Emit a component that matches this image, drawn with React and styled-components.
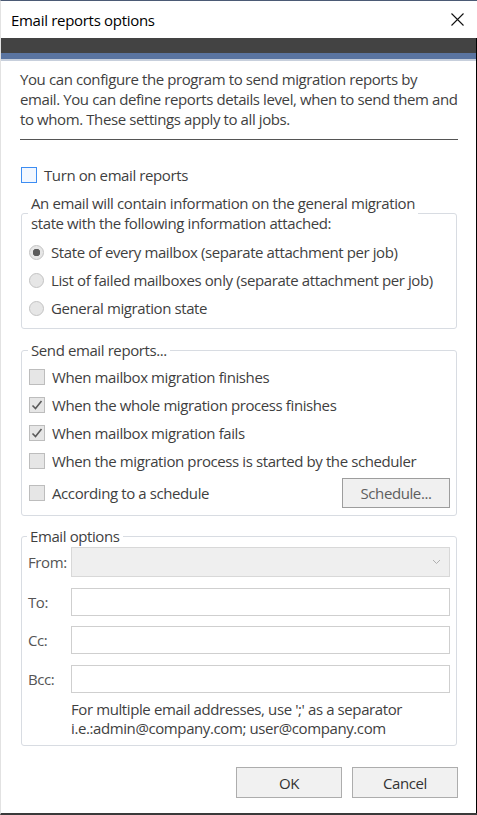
import React from "react"
import styled, { createGlobalStyle } from "styled-components"

const GlobalStyle = createGlobalStyle`
  html, body {
    margin: 0;
    padding: 0;
    background: #fff;
  }
  body {
    font-family: "Open Sans", "Noto Sans", sans-serif;
    color: #3f3f3f;
  }
  * {
    box-sizing: border-box;
  }
`

const App = () => (
  <>
    <GlobalStyle />
    <Window>
      <TitleBar>
        <Title>Email reports options</Title>
        <CloseIcon />
      </TitleBar>
      <Body>
        <DarkBand />
        <BlueBand />
        <Content>
          <Intro>
            You can configure the program to send migration reports by<br />
            email. You can define reports details level, when to send them and<br />
            to whom. These settings apply to all jobs.
          </Intro>
          <Rule />
          <TopOption>
            <CheckBox $focus />
            <span>Turn on email reports</span>
          </TopOption>

          <Group $kind="first">
            <Legend>
              An email will contain information on the general migration<br />
              state with the following information attached:
            </Legend>
            <Radio label="State of every mailbox (separate attachment per job)" checked />
            <Radio label="List of failed mailboxes only (separate attachment per job)" />
            <Radio label="General migration state" />
          </Group>

          <Group $kind="reports">
            <Legend>Send email reports...</Legend>
            <Check label="When mailbox migration finishes" />
            <Check label="When the whole migration process finishes" checked />
            <Check label="When mailbox migration fails" checked />
            <Check label="When the migration process is started by the scheduler" />
            <ScheduleRow>
              <Check label="According to a schedule" />
              <ScheduleButton>Schedule...</ScheduleButton>
            </ScheduleRow>
          </Group>

          <Group $kind="fields">
            <Legend>Email options</Legend>
            <FieldRow>
              <FieldLabel>From:</FieldLabel>
              <Select>
                <Chevron />
              </Select>
            </FieldRow>
            <FieldRow>
              <FieldLabel>To:</FieldLabel>
              <Input />
            </FieldRow>
            <FieldRow>
              <FieldLabel>Cc:</FieldLabel>
              <Input />
            </FieldRow>
            <FieldRow>
              <FieldLabel>Bcc:</FieldLabel>
              <Input />
            </FieldRow>
            <Hint>
              For multiple email addresses, use ';' as a separator<br />
              i.e.:admin@company.com; user@company.com
            </Hint>
          </Group>
        </Content>
        <Footer>
          <Button>OK</Button>
          <Button>Cancel</Button>
        </Footer>
      </Body>
    </Window>
  </>
)

export default App

const Radio = ({ label, checked }) => (
  <OptionRow>
    <RadioDot $checked={checked} />
    <span>{label}</span>
  </OptionRow>
)

const Check = ({ label, checked }) => (
  <OptionRow $gap={7}>
    <CheckBox>
      {checked && (
        <svg width="12" height="12" viewBox="0 0 12 12">
          <path d="M1.5 6.5 L4.5 9.5 L10.5 2" fill="none" stroke="#5a5a5a" strokeWidth="1.6" />
        </svg>
      )}
    </CheckBox>
    <span>{label}</span>
  </OptionRow>
)

const CloseIcon = () => (
  <svg width="13" height="13" viewBox="0 0 13 13">
    <path d="M0.5 0.5 L12.5 12.5 M12.5 0.5 L0.5 12.5" stroke="#111" strokeWidth="1.1" />
  </svg>
)

const Chevron = () => (
  <svg width="9" height="6" viewBox="0 0 9 6">
    <path d="M1 1 L4.5 4.5 L8 1" fill="none" stroke="#b0b0b0" strokeWidth="1" />
  </svg>
)

const groupSpacing = {
  first: { margin: "4px", padding: "5px 6px 6px 7px" },
  reports: { margin: "11px", padding: "3px 6px 4px 7px" },
  fields: { margin: "10px", padding: "1px 6px 7px 6px" },
}

const Window = styled.div`
  width: 477px;
  height: 815px;
  display: flex;
  flex-direction: column;
  border-top: 1px solid #4b5a75;
  border-left: 1px solid #e2e2e2;
  border-bottom: 2px solid #3a3a3a;
  background: #fff;
  font-size: 15px;
  letter-spacing: -0.4px;
`

const TitleBar = styled.div`
  height: 37px;
  flex: 0 0 37px;
  display: flex;
  align-items: center;
  justify-content: space-between;
  padding: 0 13px 0 10px;
`

const Title = styled.div`
  font-size: 15px;
  letter-spacing: -0.3px;
  color: #000;
`

const Body = styled.div`
  flex: 1;
  display: flex;
  flex-direction: column;
  border-right: 1px solid #000;
`

const DarkBand = styled.div`
  height: 15px;
  background: #434343;
`

const BlueBand = styled.div`
  height: 6px;
  background: #5a74a0;
  border-bottom: 2px solid #c7cfdc;
  box-sizing: content-box;
`

const Content = styled.div`
  padding: 8px 18px 0 19px;
`

const Intro = styled.p`
  margin: 0;
  line-height: 20px;
  white-space: nowrap;
`

const Rule = styled.div`
  height: 1px;
  margin-top: 10px;
  background: #555;
`

const OptionRow = styled.label`
  display: flex;
  align-items: center;
  gap: ${(p) => p.$gap || 7}px;
  height: 28px;
  white-space: nowrap;
`

const TopOption = styled(OptionRow)`
  margin-top: 21px;
  padding-left: 1px;
`

const CheckBox = styled.span`
  width: 16px;
  height: 16px;
  flex: 0 0 16px;
  display: flex;
  align-items: center;
  justify-content: center;
  border: 1px solid ${(p) => (p.$focus ? "#3d8df2" : "#bdbdbd")};
  background: ${(p) => (p.$focus ? "#f2f7ff" : "#e6e6e6")};
`

const RadioDot = styled.span`
  width: 15px;
  height: 15px;
  flex: 0 0 15px;
  border-radius: 50%;
  border: 1px solid #c3c3c3;
  background: ${(p) =>
    p.$checked
      ? "radial-gradient(circle, #5b5b5b 0 3.5px, #e6e6e6 4px)"
      : "#e6e6e6"};
`

const Group = styled.fieldset`
  margin: ${(p) => groupSpacing[p.$kind].margin} 1px 0 1px;
  padding: ${(p) => groupSpacing[p.$kind].padding};
  border: 1px solid #d8dce2;
  border-radius: 3px;
  min-width: 0;
`

const Legend = styled.legend`
  margin-left: -1px;
  padding: 0 3px;
  line-height: 20px;
  white-space: nowrap;
`

const ScheduleRow = styled.div`
  display: flex;
  align-items: center;
  justify-content: space-between;
  height: 36px;
`

const ScheduleButton = styled.button`
  width: 108px;
  height: 30px;
  border: 1px solid #9d9d9d;
  background: #f0f0f0;
  color: #5e5e5e;
  font: inherit;
  letter-spacing: inherit;
  padding: 0;
`

const FieldRow = styled.div`
  display: flex;
  align-items: center;
  height: 28px;
  margin-bottom: 10.5px;

  &:first-of-type {
    height: 30px;
  }
`

const FieldLabel = styled.span`
  width: 43px;
  color: #555;
`

const Input = styled.div`
  flex: 1;
  height: 100%;
  border: 1px solid #cfcfcf;
  background: #fff;
`

const Select = styled(Input)`
  display: flex;
  align-items: center;
  justify-content: flex-end;
  padding-right: 8px;
  background: #efefef;
  border-color: #d8d8d8;
`

const Hint = styled.div`
  margin: -3px 0 0 43px;
  line-height: 19px;
`

const Footer = styled.div`
  display: flex;
  justify-content: flex-end;
  gap: 10px;
  padding: 21px 18px 0 0;
`

const Button = styled.button`
  width: 106px;
  height: 31px;
  border: 1px solid #adadad;
  background: #f1f1f1;
  color: #333;
  font: inherit;
  letter-spacing: inherit;
  padding: 0;
`
